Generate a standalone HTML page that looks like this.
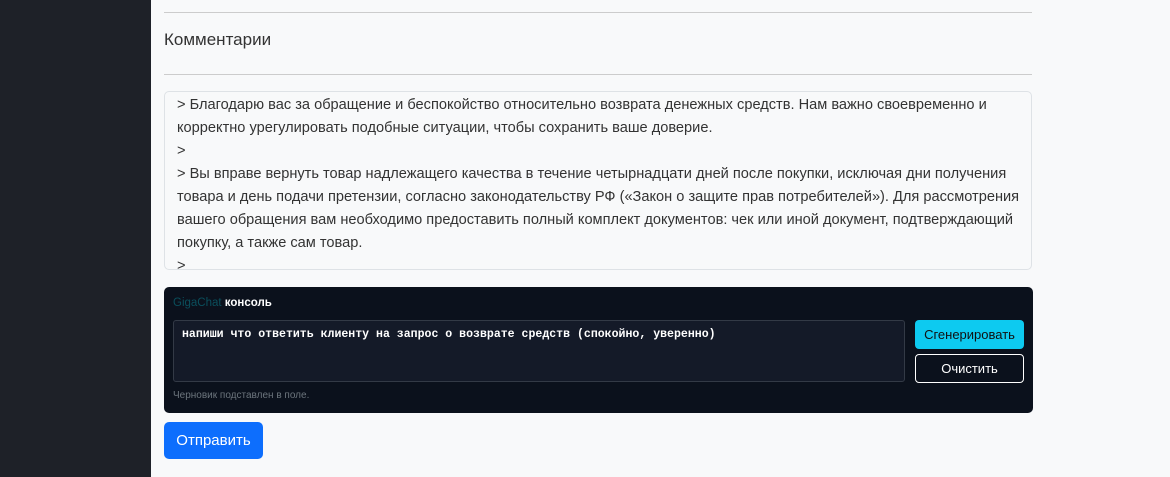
<!DOCTYPE html><html><head><meta charset="utf-8"><style>
body{margin:0;width:1170px;height:477px;background:#f8f9fa;font-family:"Liberation Sans","DejaVu Sans",sans-serif;position:relative;overflow:hidden;color:#212529}
.sb{position:absolute;left:0;top:0;width:151px;height:477px;background:#1e2128}
.hr{position:absolute;left:164px;width:868px;height:1px;background:#ccc}
.t{position:absolute;left:164px;top:30px;font-size:17px;color:#333}
.ta{position:absolute;left:164px;top:91px;width:846px;height:165px;padding:2px 8px 10px 12px;border:1px solid #dee2e6;border-radius:5px;background:#f8f9fa;font-size:14.6px;line-height:23px;color:#333;overflow:hidden;white-space:nowrap}
.con{position:absolute;left:164px;top:287px;width:869px;height:126px;background:#0b111c;border-radius:5px}
.h{position:absolute;left:9px;top:10px;font-size:11.5px}
.in{position:absolute;left:9px;top:33px;width:732px;height:62px;border:1px solid #333a46;border-radius:3px;background:#141a28;box-sizing:border-box;padding:7px 8px;font-family:"Liberation Mono","DejaVu Sans Mono",monospace;font-size:11.55px;color:#fff;font-weight:bold}
.b1{position:absolute;left:751px;top:33px;width:109px;height:29px;background:#0dcaf0;border-radius:4px;font-size:13px;color:#111;text-align:center;line-height:29px}
.b2{position:absolute;left:751px;top:67px;width:107px;height:27px;border:1px solid #fff;border-radius:4px;font-size:13px;color:#fff;text-align:center;line-height:27px}
.hint{position:absolute;left:9px;top:103px;font-size:10px;color:#6c757d}
.send{position:absolute;left:164px;top:422px;width:99px;height:37px;background:#0d6efd;border-radius:5px;color:#fff;font-size:15px;text-align:center;line-height:37px}
</style></head><body>
<div class="sb"></div>
<div class="hr" style="top:12px"></div>
<div class="t">Комментарии</div>
<div class="hr" style="top:74px"></div>
<div class="ta">&gt; Благодарю вас за обращение и беспокойство относительно возврата денежных средств. Нам важно своевременно и<br>корректно урегулировать подобные ситуации, чтобы сохранить ваше доверие.<br>&gt;<br>&gt; Вы вправе вернуть товар надлежащего качества в течение четырнадцати дней после покупки, исключая дни получения<br>товара и день подачи претензии, согласно законодательству РФ («Закон о защите прав потребителей»). Для рассмотрения<br>вашего обращения вам необходимо предоставить полный комплект документов: чек или иной документ, подтверждающий<br>покупку, а также сам товар.<br>&gt;</div>
<div class="con">
<div class="h"><span style="color:#0b4f5c">GigaChat</span> <b style="color:#fff">консоль</b></div>
<div class="in">напиши что ответить клиенту на запрос о возврате средств (спокойно, уверенно)</div>
<div class="b1">Сгенерировать</div>
<div class="b2">Очистить</div>
<div class="hint">Черновик подставлен в поле.</div>
</div>
<div class="send">Отправить</div>
</body></html>
